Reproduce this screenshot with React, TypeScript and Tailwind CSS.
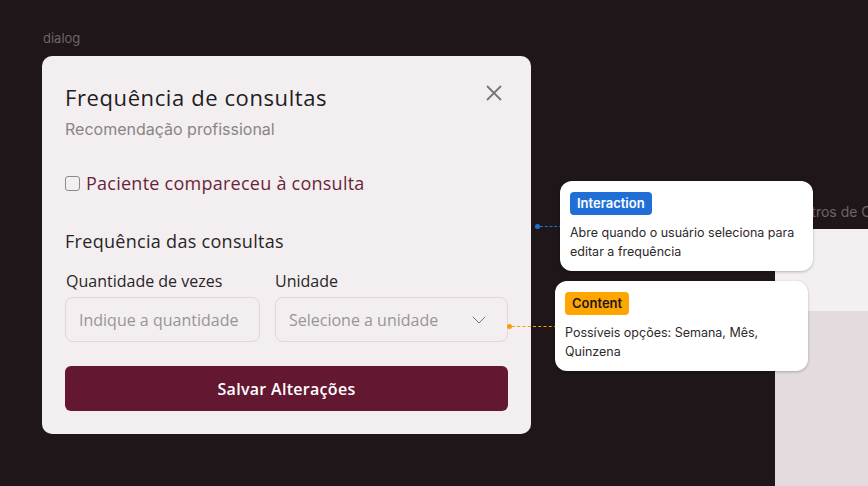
import { ChevronDown } from 'lucide-react';

const round = "font-['Open_Sans',sans-serif]";
const inter = "font-['Inter',sans-serif]";

function Note({ tag, tagClass, children }: { tag: string; tagClass: string; children: React.ReactNode }) {
  return (
    <div className="flex h-[90px] w-[253px] flex-col items-start rounded-[12px] bg-white pl-[10px] pr-[6px] pt-[11px] shadow-[0_1px_3px_rgba(0,0,0,0.25)]">
      <span className={`rounded-[4px] px-[7px] text-[13px] leading-[23px] font-semibold ${tagClass}`}>{tag}</span>
      <p className="mt-[8px] text-[12.5px] leading-[19px] text-[#2d2a2b]">{children}</p>
    </div>
  );
}

export default function App() {
  return (
    <div className={`relative h-[486px] w-[868px] overflow-hidden bg-[#1e1619] ${inter}`}>
      <span className="absolute left-[43px] top-[29px] text-[13px] leading-[18px] text-[#6c6568]">dialog</span>

      {/* next frame on the canvas */}
      <span className="absolute left-[775px] top-[203px] text-[14px] leading-[18px] whitespace-nowrap text-[#6c6568]">
        Registros de Consultas
      </span>
      <div className="absolute left-[775px] top-[229px] flex h-[257px] w-[93px] flex-col">
        <div className="h-[82px] bg-[#f4f0f1]" />
        <div className="flex-1 bg-[#e3dbde]" />
      </div>

      {/* dialog */}
      <div className="absolute left-[42px] top-[56px] flex h-[378px] w-[489px] flex-col rounded-[10px] bg-[#f3eff0] px-[23px] pt-[27px]">
        <div className="flex items-start justify-between">
          <h2 className={`${round} text-[22px] leading-[28px] tracking-[0.6px] text-[#221c1e]`}>Frequência de consultas</h2>
          <svg className="mr-[6px] mt-[2px]" width="16" height="16" viewBox="0 0 16 16" fill="none" stroke="#7a7577" strokeWidth="1.8">
            <path d="M1 1L15 15M15 1L1 15" />
          </svg>
        </div>
        <p className="mt-[8px] text-[16px] leading-[20px] text-[#8a8486]">Recomendação profissional</p>

        <label className="mt-[32px] flex items-center gap-[6px]">
          <span className="h-[15px] w-[15px] rounded-[3px] border-[1.5px] border-[#8f8a8c]" />
          <span className={`${round} text-[18px] leading-[24px] tracking-[0.25px] text-[#6b1f3a]`}>Paciente compareceu à consulta</span>
        </label>

        <h3 className={`${round} mt-[34px] text-[18px] leading-[24px] tracking-[0.3px] text-[#2a2426]`}>Frequência das consultas</h3>

        <div className="mt-[17px] flex gap-[15px]">
          <div className="flex w-[195px] flex-col gap-[5px]">
            <span className={`${round} pl-[1px] text-[16px] leading-[22px] text-[#2a2426]`}>Quantidade de vezes</span>
            <div className="flex h-[45px] items-center rounded-[8px] border border-[#e2d6da] px-[13px]">
              <span className={`${round} text-[16px] text-[#9a9496]`}>Indique a quantidade</span>
            </div>
          </div>
          <div className="flex flex-1 flex-col gap-[5px]">
            <span className={`${round} text-[16px] leading-[22px] text-[#2a2426]`}>Unidade</span>
            <div className="flex h-[45px] items-center justify-between rounded-[8px] border border-[#e2d6da] pl-[13px] pr-[16px]">
              <span className={`${round} text-[16px] text-[#9a9496]`}>Selecione a unidade</span>
              <ChevronDown size={24} strokeWidth={1} className="text-[#7a7577]" />
            </div>
          </div>
        </div>

        <button className={`${round} mt-[24px] h-[45px] rounded-[6px] bg-[#631730] text-[16px] font-semibold tracking-[0.3px] text-white`}>
          Salvar Alterações
        </button>
      </div>

      {/* connectors */}
      <div className="absolute left-[535px] top-[224px] flex items-center">
        <span className="h-[5px] w-[5px] rounded-full bg-[#1f6fd6]" />
        <span className="w-[22px] border-t border-dashed border-[#1f6fd6]" />
      </div>
      <div className="absolute left-[507px] top-[324px] flex items-center">
        <span className="h-[5px] w-[5px] rounded-full bg-[#f5a000]" />
        <span className="w-[45px] border-t border-dashed border-[#f5a000]" />
      </div>

      <div className="absolute left-[560px] top-[181px]">
        <Note tag="Interaction" tagClass="bg-[#1f6fd6] text-white">
          Abre quando o usuário seleciona para editar a frequência
        </Note>
      </div>
      <div className="absolute left-[555px] top-[281px]">
        <Note tag="Content" tagClass="bg-[#ffa500] text-[#1e1619]">
          Possíveis opções: Semana, Mês, Quinzena
        </Note>
      </div>
    </div>
  );
}
